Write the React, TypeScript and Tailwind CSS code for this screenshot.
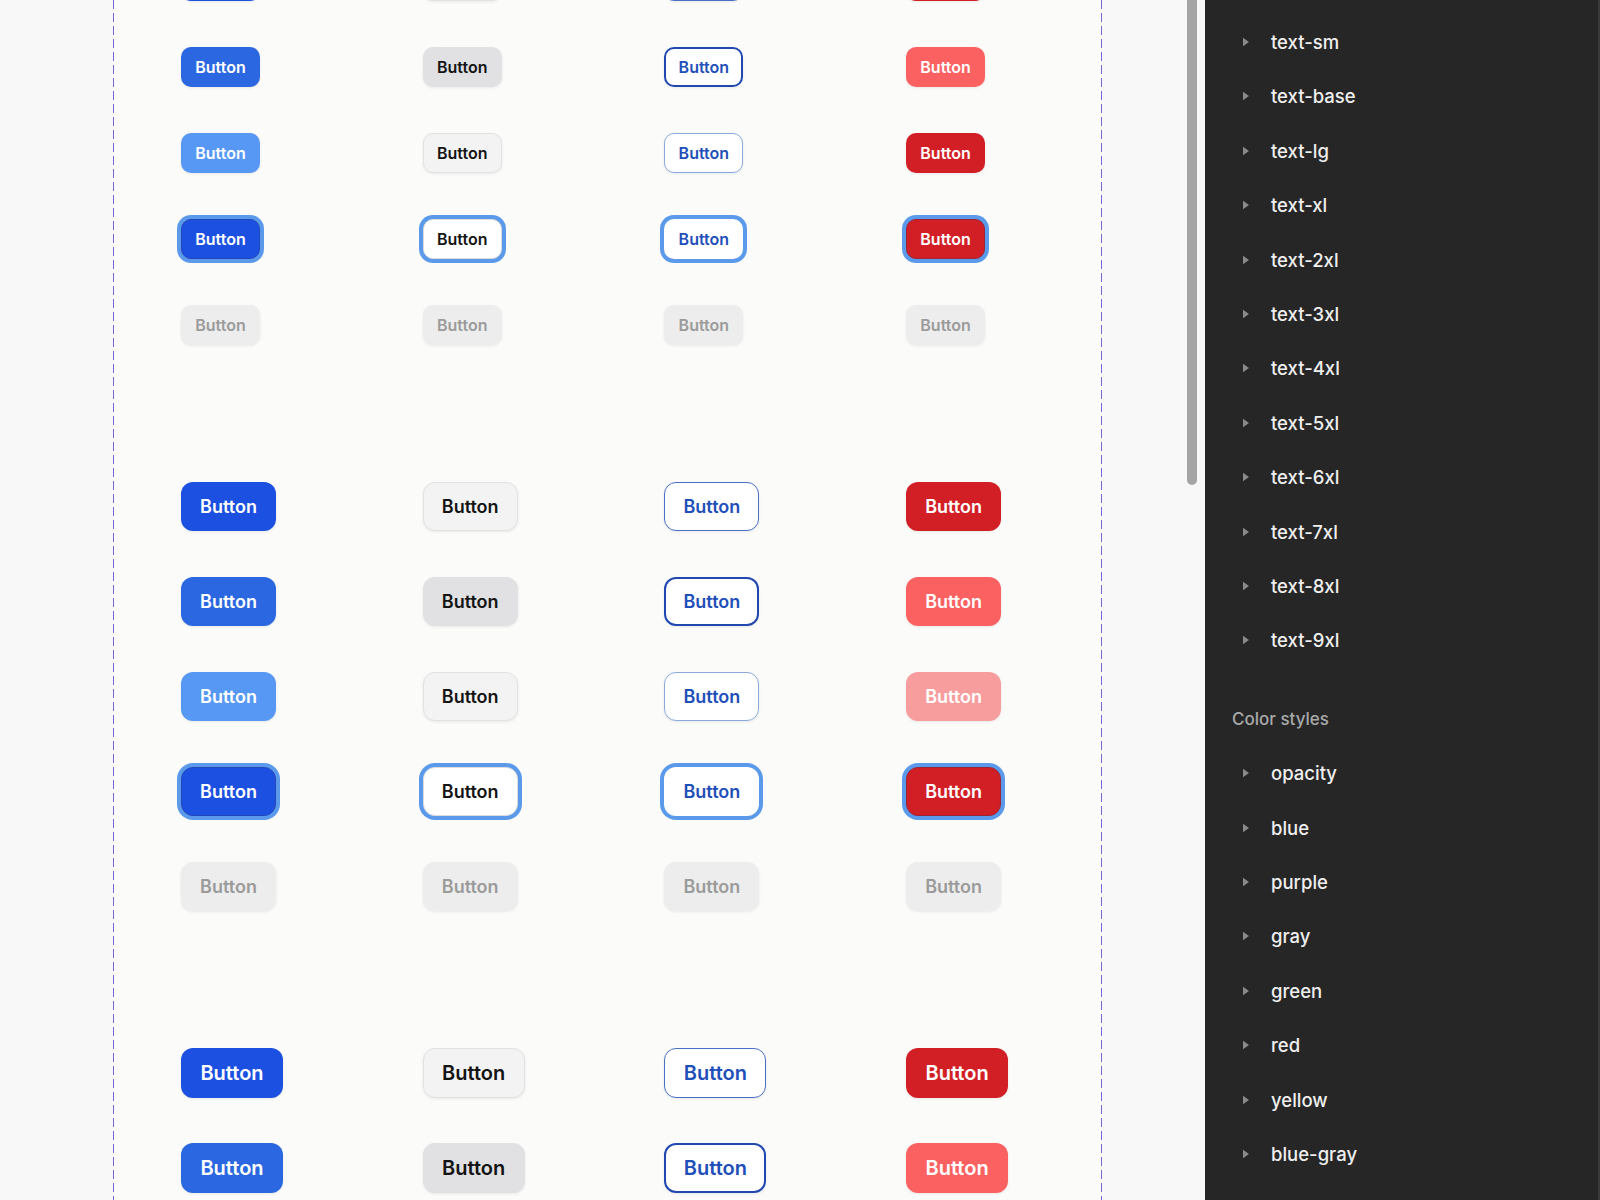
import React from "react";

type Size = "sm" | "md" | "lg";

const sizeCls: Record<Size, string> = {
  sm: "h-[40px] w-[79px] rounded-[10px] text-[16px]",
  md: "h-[49px] w-[95px] rounded-[12px] text-[18px]",
  lg: "h-[50px] w-[102px] rounded-[12px] text-[20px]",
};

// variant + state styles, written out in full so Tailwind picks them up
const V = {
  pDef: "bg-[#1c50e0] text-white",
  pHov: "bg-[#2a67e0] text-white",
  pLight: "bg-[#5698f3] text-white",
  pFocus: "bg-[#1c50e0] text-white border border-[#2447b8] ring-4 ring-[#5b9aea]",
  sDef: "bg-[#f3f3f3] text-[#141414] border border-[#e2e2e2]",
  sHov: "bg-[#e1e1e3] text-[#141414]",
  sFocus: "bg-white text-[#141414] border border-[#dcdcdc] ring-4 ring-[#5b9aea]",
  oDef: "bg-white text-[#1f4fb9] border border-[#4870c4]",
  oHov: "bg-white text-[#1f4fb9] border-2 border-[#2048b0]",
  oLight: "bg-white text-[#1f4fb9] border border-[#8aaade]",
  oFocus: "bg-white text-[#1f4fb9] ring-4 ring-[#5b9aea]",
  dDef: "bg-[#d21f26] text-white",
  dHov: "bg-[#fb6161] text-white",
  dLight: "bg-[#f89d9d] text-white",
  dFocus: "bg-[#d21f26] text-white border border-[#9b2535] ring-4 ring-[#5b9aea]",
  dis: "bg-[#ededed] text-[#9b9b9b]",
};

const focusRow = [V.pFocus, V.sFocus, V.oFocus, V.dFocus];
const disRow = [V.dis, V.dis, V.dis, V.dis];
const defRow = [V.pDef, V.sDef, V.oDef, V.dDef];
const hovRow = [V.pHov, V.sHov, V.oHov, V.dHov];

const sets: { size: Size; gap: string; rows: string[][] }[] = [
  {
    size: "sm",
    gap: "gap-[46px]",
    rows: [defRow, hovRow, [V.pLight, V.sDef, V.oLight, V.dDef], focusRow, disRow],
  },
  {
    size: "md",
    gap: "gap-[46px]",
    rows: [defRow, hovRow, [V.pLight, V.sDef, V.oLight, V.dLight], focusRow, disRow],
  },
  {
    // the rest of this set is below the fold
    size: "lg",
    gap: "gap-[45px]",
    rows: [defRow, hovRow],
  },
];

function Btn({ size, cls }: { size: Size; cls: string }) {
  return (
    <button
      className={`flex items-center justify-center font-semibold leading-none shadow-[0_1px_3px_rgba(0,0,0,0.08)] ${sizeCls[size]} ${cls}`}
    >
      Button
    </button>
  );
}

const typeStyles = [
  "text-sm",
  "text-base",
  "text-lg",
  "text-xl",
  "text-2xl",
  "text-3xl",
  "text-4xl",
  "text-5xl",
  "text-6xl",
  "text-7xl",
  "text-8xl",
  "text-9xl",
];

const colorStyles = ["opacity", "blue", "purple", "gray", "green", "red", "yellow", "blue-gray"];

function Item({ label }: { label: string }) {
  return (
    <div className="flex h-[54.4px] shrink-0 items-center pl-[37px]">
      <svg width="8" height="10" viewBox="0 0 8 10" className="shrink-0">
        <path d="M1 0.8 L7 5 L1 9.2 Z" fill="#8a8a8a" />
      </svg>
      <span className="ml-[21px] text-[18.5px] font-medium leading-6 text-[#efefef]">{label}</span>
    </div>
  );
}

const dashed =
  "w-px shrink-0 bg-[image:repeating-linear-gradient(to_bottom,#7467d6_0px,#7467d6_9px,transparent_9px,transparent_13px)]";

export default function App() {
  return (
    <div className="flex h-[1200px] w-[1600px] overflow-hidden bg-[#f8f8f8] font-[family-name:Inter,'Noto_Sans',sans-serif]">
      <div className="w-[113px] shrink-0" />
      <div className={dashed} />
      <main className="w-[987px] shrink-0 overflow-hidden bg-[#fbfbfa] pl-[67px]">
        <div className="-mt-[39px] flex flex-col gap-[137px]">
          {sets.map((set, si) => (
            <div key={si} className={`flex flex-col ${set.gap}`}>
              {set.rows.map((row, ri) => (
                <div key={ri} className="grid grid-cols-[repeat(4,241.7px)]">
                  {row.map((cls, ci) => (
                    <div key={ci}>
                      <Btn size={set.size} cls={cls} />
                    </div>
                  ))}
                </div>
              ))}
            </div>
          ))}
        </div>
      </main>
      <div className={dashed} />
      <div className="flex w-[103px] shrink-0 pl-[85px]">
        <div className="h-[485px] w-[10px] rounded-b-full bg-[#a4a4a4]" />
      </div>
      <aside className="flex w-[395px] shrink-0 flex-col overflow-hidden border-r-2 border-[#3a3a3a] bg-[#262626]">
        <div className="mt-[14.8px] flex flex-col">
          {typeStyles.map((t) => (
            <Item key={t} label={t} />
          ))}
          <div className="h-[78.6px] shrink-0 pl-[27px] pt-[40px] text-[17px] font-medium leading-6 text-[#a9a9a9]">
            Color styles
          </div>
          {colorStyles.map((c) => (
            <Item key={c} label={c} />
          ))}
        </div>
      </aside>
    </div>
  );
}
